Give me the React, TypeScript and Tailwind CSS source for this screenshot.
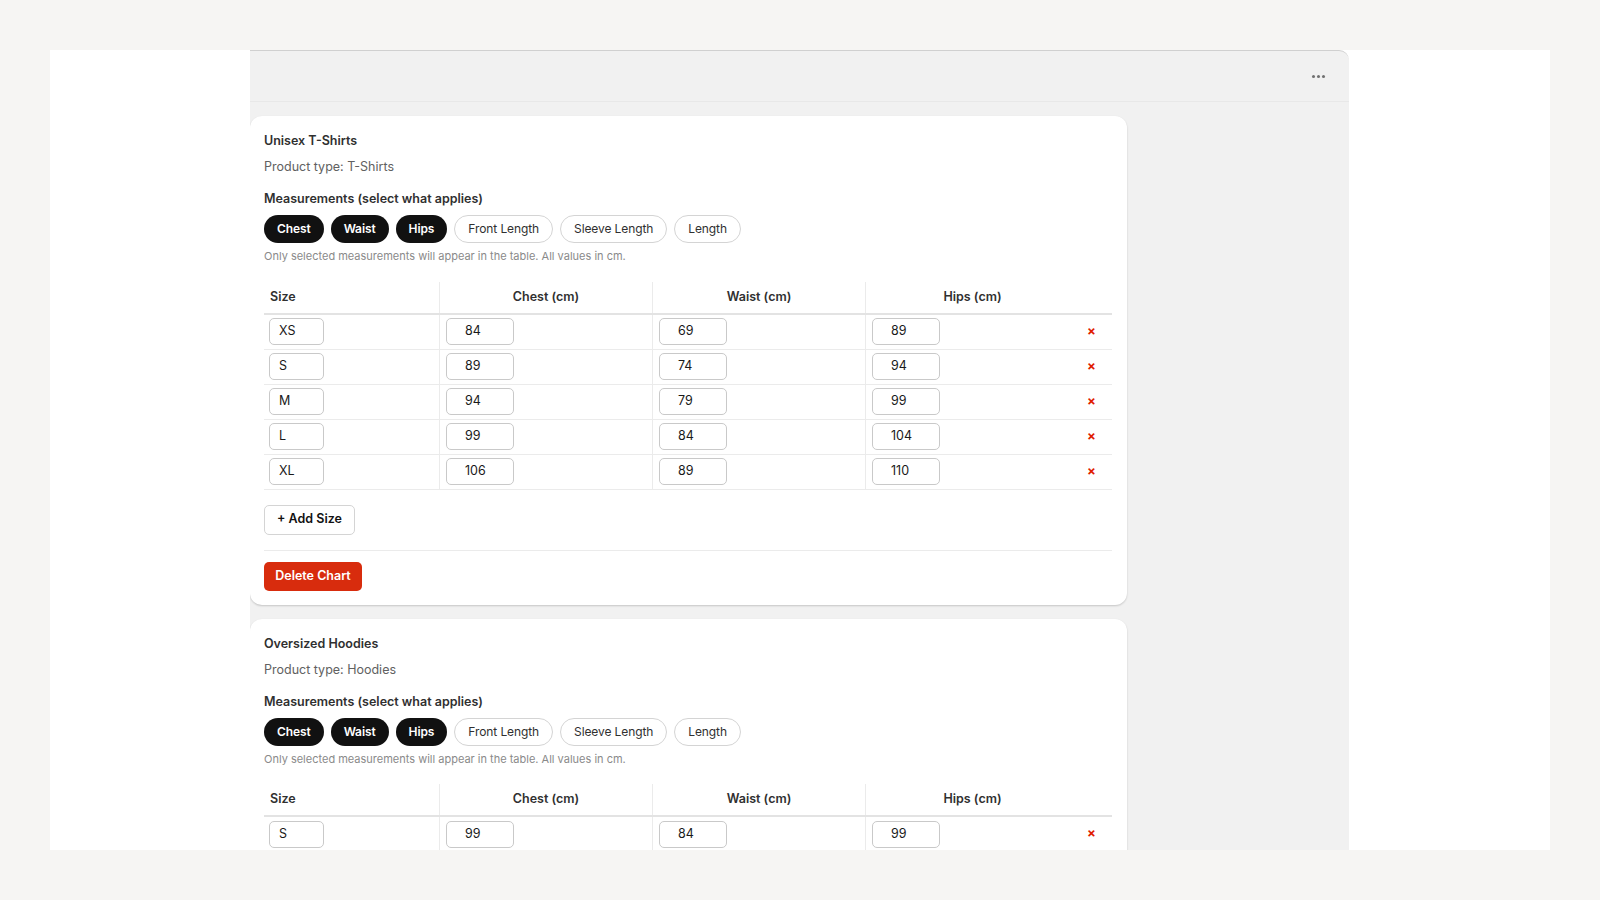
import React from "react";

const rows1 = [
  ["XS", "84", "69", "89"],
  ["S", "89", "74", "94"],
  ["M", "94", "79", "99"],
  ["L", "99", "84", "104"],
  ["XL", "106", "89", "110"],
];
const rows2 = [["S", "99", "84", "99"]];

function Input({ v }: { v: string }) {
  return (
    <div className="w-[68px] h-[27px] border border-[#c9c9c9] rounded-[5px] flex items-center pl-[18px] text-[12.5px] text-[#1a1a1a] bg-white">
      {v}
    </div>
  );
}

function Card({ title, type, rows, full }: { title: string; type: string; rows: string[][]; full: boolean }) {
  const chips = [
    ["Chest", true],
    ["Waist", true],
    ["Hips", true],
    ["Front Length", false],
    ["Sleeve Length", false],
    ["Length", false],
  ] as const;
  return (
    <div className="bg-white rounded-[12px] shadow-[0_1px_2px_rgba(0,0,0,0.18)] w-[877px] px-[14px] pt-[16px] pb-[14px] shrink-0">
      <div className="text-[12.5px] font-semibold text-[#303030] leading-[18px]">{title}</div>
      <div className="text-[12.5px] text-[#616161] mt-[8px] leading-[18px]">{type}</div>
      <div className="text-[12.5px] font-semibold text-[#303030] mt-[14px] leading-[18px]">Measurements (select what applies)</div>
      <div className="flex gap-[7px] mt-[7px]">
        {chips.map(([c, on]) => (
          <div
            key={c}
            className={
              "h-[28px] rounded-full flex items-center px-[13px] text-[12px] tracking-[-0.1px] " +
              (on ? "bg-[#111] text-white font-semibold" : "bg-white border border-[#d4d4d4] text-[#303030]")
            }
          >
            {c}
          </div>
        ))}
      </div>
      <div className="text-[11px] text-[#8a8a8a] mt-[5px]">Only selected measurements will appear in the table. All values in cm.</div>
      <div className="mt-[17px] w-[848px]">
        <div className="flex h-[33px] items-center border-b-2 border-[#e3e3e3] text-[12.5px] font-semibold text-[#303030]">
          <div className="w-[176px] px-[6px] h-full flex items-center border-r border-[#ebebeb]">Size</div>
          <div className="w-[213px] h-full flex items-center justify-center border-r border-[#ebebeb]">Chest (cm)</div>
          <div className="w-[213px] h-full flex items-center justify-center border-r border-[#ebebeb]">Waist (cm)</div>
          <div className="w-[213px] h-full flex items-center justify-center">Hips (cm)</div>
          <div className="flex-1" />
        </div>
        {rows.map((r, i) => (
          <div key={i} className="flex h-[35px] items-center border-b border-[#ebebeb]">
            <div className="w-[176px] px-[5px] h-full flex items-center border-r border-[#ebebeb]">
              <div className="w-[55px] h-[27px] border border-[#c9c9c9] rounded-[5px] flex items-center px-[9px] text-[12.5px] text-[#1a1a1a]">{r[0]}</div>
            </div>
            {[1, 2, 3].map((k) => (
              <div key={k} className={"w-[213px] px-[6px] h-full flex items-center " + (k < 3 ? "border-r border-[#ebebeb]" : "")}>
                <Input v={r[k]} />
              </div>
            ))}
            <div className="flex-1 flex items-center pl-[8px] text-[#e01b00] text-[13px] font-bold">×</div>
          </div>
        ))}
      </div>
      {full && (
        <>
          <div className="mt-[15px] w-[91px] h-[30px] border border-[#d4d4d4] rounded-[5px] flex items-center justify-center text-[12.5px] font-semibold text-[#111]">
            + Add Size
          </div>
          <div className="w-[848px] border-t border-[#ebebeb] mt-[15px]" />
          <div className="mt-[11px] w-[98px] h-[29px] bg-[#d82c0d] rounded-[5px] flex items-center justify-center text-[12.5px] font-semibold text-white">
            Delete Chart
          </div>
        </>
      )}
    </div>
  );
}

export default function App() {
  return (
    <div className="w-[1600px] h-[900px] bg-[#f6f5f3] p-[50px]" style={{ fontFamily: "Inter, 'Liberation Sans', sans-serif" }}>
      <div className="w-[1500px] h-[800px] bg-white overflow-hidden flex">
        <div className="ml-[200px] w-[1099px] h-full bg-[#f1f1f1] border-t border-[#d0d0d0] rounded-tr-[10px] flex flex-col overflow-hidden">
          <div className="h-[51px] shrink-0 border-b border-[#e8e8e8] flex items-center justify-end pr-[24px]">
            <div className="flex gap-[2px]">
              <span className="w-[3px] h-[3px] rounded-full bg-[#707070]" />
              <span className="w-[3px] h-[3px] rounded-full bg-[#707070]" />
              <span className="w-[3px] h-[3px] rounded-full bg-[#707070]" />
            </div>
          </div>
          <div className="flex flex-col gap-[14px] pt-[14px]">
            <Card title="Unisex T-Shirts" type="Product type: T-Shirts" rows={rows1} full />
            <Card title="Oversized Hoodies" type="Product type: Hoodies" rows={rows2} full />
          </div>
        </div>
      </div>
    </div>
  );
}
